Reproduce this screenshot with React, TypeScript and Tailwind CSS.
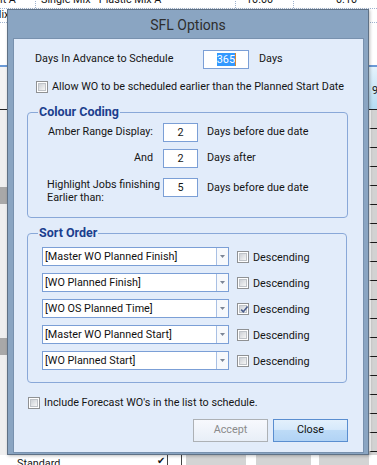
import React from "react";

const F = "font-['Roboto',sans-serif]";

function Check({ checked = false }: { checked?: boolean }) {
  return (
    <div className="w-[12px] h-[12px] shrink-0 border border-[#8f9193] bg-white p-[1px]">
      <div className="relative w-full h-full border border-[#bfc3c8] bg-linear-to-br from-[#cdd1d6] to-[#f6f6f6]">
        {checked && (
          <svg className="absolute left-[0px] top-[-1px]" width="9" height="9" viewBox="0 0 9 9">
            <path d="M1.2 4.6 L3.3 6.8 L7.6 1.4" fill="none" stroke="#4b5e8d" strokeWidth="1.6" />
          </svg>
        )}
      </div>
    </div>
  );
}

function Combo({ text, checked }: { text: string; checked?: boolean }) {
  return (
    <div className="flex items-center">
      <div className="ml-[14px] w-[187px] h-[19px] border border-[#7b9fd6] bg-white flex">
        <div className="flex-1 pl-[2px] leading-[17px] whitespace-nowrap text-[#111]">{text}</div>
        <div className="w-[12px] border-l border-[#a9c0e4] bg-[#f7f9fc] flex items-center justify-center">
          <svg width="5" height="3" viewBox="0 0 5 3">
            <polygon points="0,0 5,0 2.5,3" fill="#7b8596" />
          </svg>
        </div>
      </div>
      <div className="ml-[8px]">
        <Check checked={checked} />
      </div>
      <div className="ml-[4px] leading-[13px] mt-[2px]">Descending</div>
    </div>
  );
}

function NumBox({ v }: { v: string }) {
  return (
    <div className="ml-[10px] w-[35px] h-[19px] shrink-0 border border-[#7b9fd6] bg-white text-center leading-[17px]">
      {v}
    </div>
  );
}

export default function App() {
  return (
    <div className={`relative w-[377px] h-[465px] overflow-hidden bg-[#efefef] text-[10.8px] text-[#151515] ${F}`}>
      {/* background application */}
      <div className="flex flex-col w-full h-full">
        <div className="h-[23px] bg-white border-b border-dotted border-[#9fb3cf] relative overflow-hidden">
          <div className="flex h-[9px] border-b border-dotted border-[#9fb3cf] overflow-hidden">
            <div className="w-[36px] border-r border-dotted border-[#9fb3cf] leading-[12px] -mt-[6px] whitespace-nowrap">it A</div>
            <div className="w-[200px] border-r border-dotted border-[#9fb3cf] leading-[12px] -mt-[6px] pl-[5px] whitespace-nowrap">Single Mix - Plastic Mix A</div>
            <div className="w-[58px] border-r border-dotted border-[#9fb3cf] leading-[12px] -mt-[6px] pl-[10px]">10.00</div>
            <div className="flex-1 leading-[12px] -mt-[6px] pl-[42px]">0.10</div>
          </div>
          <div className="leading-[12px] -ml-[8px] mt-[0px]">Mix</div>
        </div>
        <div className="h-[42px] bg-white" />
        <div className="h-[2px] bg-[#6b9ad6]" />
        <div className="h-[43px] flex">
          <div className="flex-1 bg-[#f3f3f3] border-b border-[#222]" />
          <div className="w-[8px] bg-linear-to-b from-[#e4f3fc] to-[#b6dcf3] border-b border-[#222] pl-[3px] pt-[18px] leading-[12px]">9</div>
        </div>
        <div className="flex-1 flex">
          <div className="flex-1 bg-[#efefef] flex flex-col">
            <div className="h-[77px]" />
            <div className="h-[17px] w-[7px] bg-[#a8a8a8]" />
            <div className="h-[134px]" />
            <div className="h-[17px] w-[7px] bg-[#a8a8a8]" />
          </div>
          <div className="w-[8px] flex flex-col bg-[#d2d2d2]">
            {Array.from({ length: 18 }).map((_, i) => (
              <div key={i} className="h-[19px] border-b border-[#1a1a1a] border-l-2 border-l-white" />
            ))}
          </div>
        </div>
      </div>

      {/* bottom strip */}
      <div className="absolute left-0 right-0 bottom-0 h-[10px] bg-white flex overflow-hidden">
        <div className="w-[170px] pl-[17px] leading-[12px] mt-[3px]">Standard</div>
        <div className="w-[10px] leading-[10px] text-[10px] mt-[1px]">✔</div>
        <div className="w-[16px] border-l border-[#444]" />
        <div className="w-[5px] border-l border-[#444]" />
        <div className="flex-1 bg-[#d4d4d4] flex">
          <div className="ml-[60px] w-[10px] bg-white" />
          <div className="ml-[55px] w-[8px] bg-white" />
          <div className="ml-[50px] w-[8px] bg-white" />
        </div>
      </div>

      {/* dialog */}
      <div className="absolute left-[7px] top-[9px] w-[362px] h-[446px] border border-[#5f7185] bg-[#8aa5c2] flex flex-col shadow-[1px_1px_3px_rgba(0,0,0,0.25)]">
        <div className="h-[29px] flex items-center justify-center text-[14px] text-[#2e2e2e] pt-[1px]">SFL Options</div>
        <div className="ml-[6px] w-[349px] h-[413px] bg-[#e2ecfa] ring-1 ring-[#7891ae] flex flex-col">
          {/* days in advance */}
          <div className="mt-[11px] h-[19px] flex items-center">
            <div className="ml-[21px] w-[168px] whitespace-nowrap">Days In Advance to Schedule</div>
            <div className="w-[46px] h-[19px] border border-[#7b9fd6] bg-white flex items-center justify-end pr-[12px]">
              <span className="bg-[#3399ff] text-white leading-[13px] px-[0px]">365</span>
              <span className="w-[1px] h-[13px] bg-[#d88a32]" />
            </div>
            <div className="ml-[10px]">Days</div>
          </div>
          {/* allow checkbox */}
          <div className="mt-[12px] h-[12px] flex items-center">
            <div className="ml-[22px]">
              <Check />
            </div>
            <div className="ml-[4px] whitespace-nowrap">Allow WO to be scheduled earlier than the Planned Start Date</div>
          </div>

          {/* colour coding */}
          <div className="mt-[19px] ml-[13px] w-[321px] h-[106px] shrink-0 rounded-[4px] border border-[#89a8d8] relative flex flex-col">
            <div className="absolute left-[10px] top-[-9px] px-[1px] bg-[#e2ecfa] font-bold text-[12.5px] leading-[16px] text-[#1b3f8e]">Colour Coding</div>
            <div className="mt-[10px] h-[19px] flex items-center">
              <div className="ml-[19px] w-[106px] flex justify-end whitespace-nowrap">Amber Range Display:</div>
              <NumBox v="2" />
              <div className="ml-[9px] whitespace-nowrap">Days before due date</div>
            </div>
            <div className="mt-[7px] h-[19px] flex items-center">
              <div className="ml-[19px] w-[106px] flex justify-end whitespace-nowrap">And</div>
              <NumBox v="2" />
              <div className="ml-[9px]">Days after</div>
            </div>
            <div className="mt-[10px] flex items-start">
              <div className="ml-[19px] w-[106px] leading-[13px] whitespace-nowrap">
                Highlight Jobs finishing
                <br />
                Earlier than:
              </div>
              <NumBox v="5" />
              <div className="ml-[9px] leading-[19px] whitespace-nowrap">Days before due date</div>
            </div>
          </div>

          {/* sort order */}
          <div className="mt-[15px] ml-[13px] w-[320px] h-[150px] shrink-0 rounded-[4px] border border-[#89a8d8] relative flex flex-col gap-[7px] pt-[13px]">
            <div className="absolute left-[10px] top-[-9px] px-[1px] bg-[#e2ecfa] font-bold text-[12.5px] leading-[16px] text-[#1b3f8e]">Sort Order</div>
            <Combo text="[Master WO Planned Finish]" />
            <Combo text="[WO Planned Finish]" />
            <Combo text="[WO OS Planned Time]" checked />
            <Combo text="[Master WO Planned Start]" />
            <Combo text="[WO Planned Start]" />
          </div>

          {/* include forecast */}
          <div className="mt-[14px] h-[12px] flex items-center">
            <div className="ml-[14px]">
              <Check />
            </div>
            <div className="ml-[4px] whitespace-nowrap">Include Forecast WO's in the list to schedule.</div>
          </div>

          {/* buttons */}
          <div className="mt-[10px] flex justify-end pr-[15px] gap-[5px]">
            <div className="w-[75px] h-[23px] border border-[#adb1b5] bg-linear-to-b from-[#f7f9fd] to-[#e8eef7] text-[#8a8a8a] flex items-center justify-center">
              Accept
            </div>
            <div className="w-[75px] h-[23px] border border-[#5a8ed0] bg-[linear-gradient(to_bottom,#e3f0fc_0%,#d6e9fb_45%,#bddbf7_50%,#b1d3f5_100%)] text-[#111] flex items-center justify-center">
              Close
            </div>
          </div>
        </div>
      </div>
    </div>
  );
}
